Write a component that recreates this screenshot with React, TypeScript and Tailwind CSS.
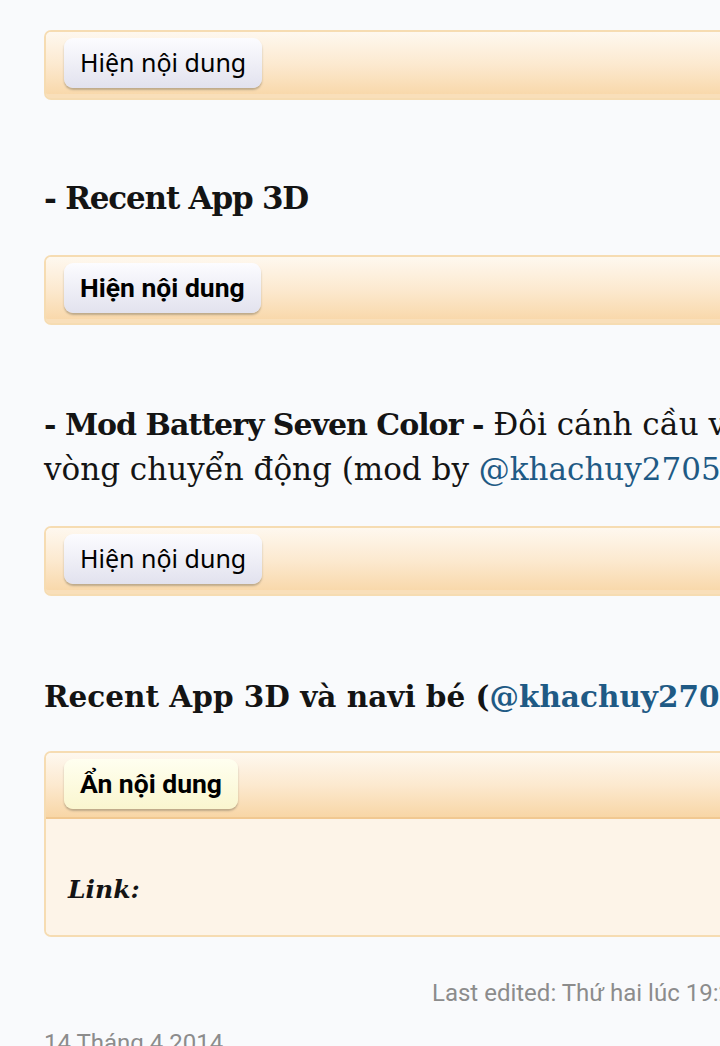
import React from "react";

const serif = "font-['DejaVu_Serif','Liberation_Serif',serif]";

function SpoilerBox({
  label,
  bold,
  open,
  children,
}: {
  label: string;
  bold?: boolean;
  open?: boolean;
  children?: React.ReactNode;
}) {
  return (
    <div className="ml-[44px] w-[700px] rounded-[7px] border-2 border-[#f6dcb2] overflow-hidden">
      <div
        className={
          "h-[66px] pl-[18px] pt-[6px] bg-gradient-to-b from-[#fef8ef] via-[#fce9cf] to-[#f8d6a6] " +
          (open ? "border-b-2 border-[#f1c891]" : "shadow-[inset_0_-4px_0_#f9dfba]")
        }
      >
        <button
          className={
            "h-[50px] px-[16px] rounded-[9px] text-black shadow-[0_2px_2px_rgba(120,110,90,0.45)] " +
            (open
              ? "bg-gradient-to-b from-[#fffff0] to-[#faf6cf] font-['Roboto',sans-serif] font-bold text-[26.5px]"
              : bold
              ? "bg-gradient-to-b from-[#fcfcff] to-[#e2e2ee] font-['Roboto',sans-serif] font-bold text-[26.5px]"
              : "bg-gradient-to-b from-[#fcfcff] to-[#e2e2ee] font-['Noto_Sans',sans-serif] text-[25px]")
          }
        >
          {label}
        </button>
      </div>
      {open && <div className="bg-[#fdf4e8] h-[116px] pl-[22px] pt-[52px]">{children}</div>}
    </div>
  );
}

export default function App() {
  return (
    <div className="w-[720px] h-[1046px] overflow-hidden bg-[#f9fafc] pt-[30px] text-[#141414]">
      <SpoilerBox label="Hiện nội dung" />

      <h3
        className={`${serif} mt-[76px] ml-[44px] text-[31px] tracking-[-1.2px] leading-[45px] font-bold whitespace-nowrap`}
      >
        - Recent App 3D
      </h3>

      <div className="mt-[34px]">
        <SpoilerBox label="Hiện nội dung" bold />
      </div>

      <p className={`${serif} mt-[77px] ml-[44px] w-[720px] text-[31px] leading-[45px] whitespace-nowrap`}>
        <b className="text-[30px] tracking-[-1px]">- Mod Battery Seven Color -</b> Đôi cánh cầu vồng
        <br />
        vòng chuyển động (mod by <span className="text-[#1f5a85]">@khachuy2705</span>)
      </p>

      <div className="mt-[34px]">
        <SpoilerBox label="Hiện nội dung" />
      </div>

      <h3 className={`${serif} mt-[78px] ml-[44px] text-[29.5px] leading-[45px] font-bold whitespace-nowrap`}>
        Recent App 3D và navi bé (<span className="text-[#1f5a85]">@khachuy2705</span>)
      </h3>

      <div className="mt-[32px]">
        <SpoilerBox label="Ẩn nội dung" open>
          <span className={`${serif} text-[25px] italic font-bold text-[#141414]`}>Link:</span>
        </SpoilerBox>
      </div>

      <div className="mt-[41px] pl-[432px] whitespace-nowrap font-['Roboto',sans-serif] text-[24px] leading-[30px] text-[#8c8c8c]">
        Last edited: Thứ hai lúc 19:20
      </div>

      <div className="mt-[20px] pl-[44px] whitespace-nowrap font-['Roboto',sans-serif] text-[24px] leading-[30px] text-[#8c8c8c]">
        14 Tháng 4 2014
      </div>
    </div>
  );
}
